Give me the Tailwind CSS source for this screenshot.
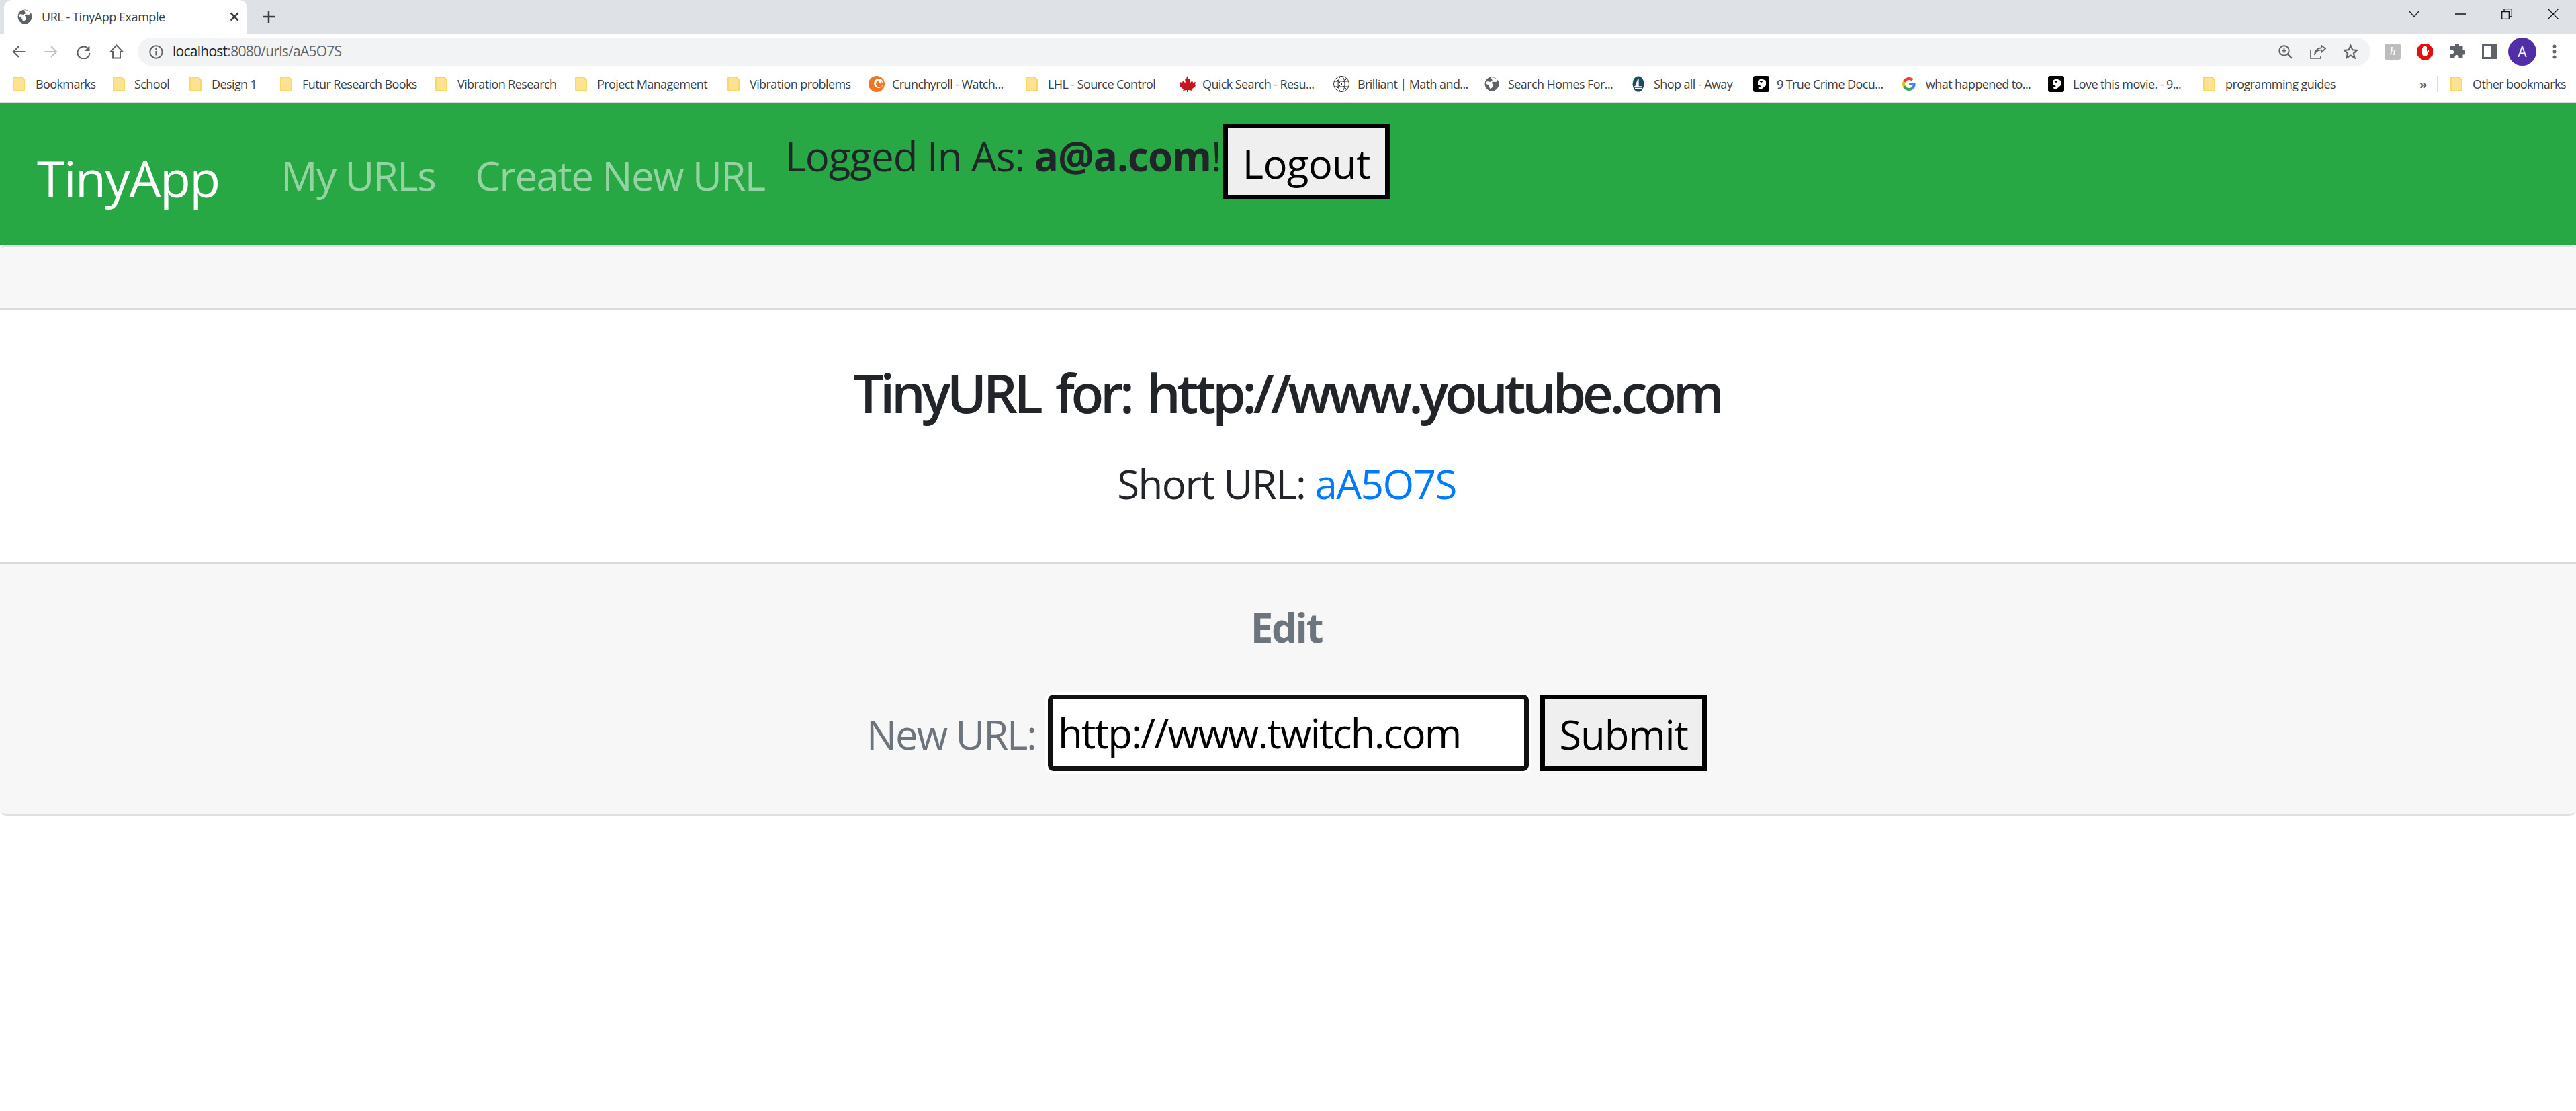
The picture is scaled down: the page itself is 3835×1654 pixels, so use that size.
<!DOCTYPE html>
<html lang="en">

<head>
    <meta charset="UTF-8">
    <title>URL - TinyApp Example</title>
    <script src="https://cdn.jsdelivr.net/npm/@tailwindcss/browser@4"></script>
</head>

<body class="bg-white font-['Open_Sans',sans-serif] h-[1654px] overflow-hidden">

    <!-- Tab strip -->
    <div class="bg-[#dee1e6] h-[50px] flex items-end relative">
        <div class="bg-white w-[362px] h-[50px] ml-[6px] rounded-t-[12px] flex items-center pl-[20px] pr-[12px] text-[18px] text-[#3c4043]">
            <svg class="w-[22px] h-[22px] mr-[14px]" viewBox="0 0 22 22"><circle cx="11" cy="11" r="10.5" fill="#5f6368"/><path d="M9 1.500c2 2 3 3 2.500 5S8 8 6.500 7.500 3 7 1.500 9c1 2 2.500 2.500 4 3.500s2 3 2.500 5.500c3-1 5-2.500 5-5s-2-2-2-4 4-1 5.500-1 3-1 2.500-3C17 2 13 .5 9 1.500z" fill="#fff"/></svg>
            <span class="flex-1 tracking-[-0.025em]">URL - TinyApp Example</span>
            <svg class="w-[14px] h-[14px]" viewBox="0 0 14 14"><path d="M1.500 1.500l11 11M12.500 1.500l-11 11" stroke="#3c4043" stroke-width="2.500"/></svg>
        </div>
        <svg class="w-[20px] h-[20px] ml-[22px] mb-[15px]" viewBox="0 0 20 20"><path d="M10 1v18M1 10h18" stroke="#3c4043" stroke-width="2.500"/></svg>
        <div class="flex-1"></div>
        <div class="flex items-center self-start h-[41px] pr-[26px] gap-[53px]">
            <svg class="w-[16px] h-[10px]" viewBox="0 0 16 10"><path d="M1 1l7 8 7-8" fill="none" stroke="#202124" stroke-width="1.200"/></svg>
            <svg class="w-[16px] h-[2px]" viewBox="0 0 16 2"><path d="M0 1h16" stroke="#111" stroke-width="1.500"/></svg>
            <svg class="w-[16px] h-[16px]" viewBox="0 0 16 16"><path d="M.7 4.700h10.600v10.600H.7zM4 4.500V.7h11.300V12h-4" fill="none" stroke="#111" stroke-width="1.300"/></svg>
            <svg class="w-[16px] h-[16px]" viewBox="0 0 16 16"><path d="M.5.500l15 15M15.500.500l-15 15" stroke="#111" stroke-width="1.200"/></svg>
        </div>
    </div>

    <!-- Toolbar -->
    <div class="h-[48px] flex items-start pt-[6px]">
        <div class="w-[205px] h-[42px] flex items-center pl-[18px] gap-[28px]">
            <svg class="w-[20px] h-[20px]" viewBox="0 0 20 20"><path d="M19.500 10H2M10 2l-8 8 8 8" fill="none" stroke="#5f6368" stroke-width="2"/></svg>
            <svg class="w-[20px] h-[20px]" viewBox="0 0 20 20"><path d="M.5 10H18M10 2l8 8-8 8" fill="none" stroke="#bdc1c6" stroke-width="2"/></svg>
            <svg class="w-[21px] h-[21px]" viewBox="0 0 21 21"><path d="M18 6.500A9 9 0 1 0 19.500 12" fill="none" stroke="#5f6368" stroke-width="2"/><path d="M19.500 1v8h-8z" fill="#5f6368"/></svg>
            <svg class="w-[21px] h-[22px]" viewBox="0 0 21 22"><path d="M10.500 1.500L1.500 11h3.500v9.500h11V11h3.500z" fill="none" stroke="#5f6368" stroke-width="2"/></svg>
        </div>
        <div class="bg-[#f1f3f4] w-[3324px] h-[42px] rounded-full flex items-center pl-[17px] pr-[17px] text-[21px]">
            <svg class="w-[21px] h-[21px] mr-[14px]" viewBox="0 0 21 21"><circle cx="10.500" cy="10.500" r="9.200" fill="none" stroke="#5f6368" stroke-width="2"/><path d="M10.500 9v6.500" stroke="#5f6368" stroke-width="2.200"/><circle cx="10.500" cy="6" r="1.400" fill="#5f6368"/></svg>
            <span class="flex-1 tracking-[-0.035em] text-[#5f6368]"><span class="text-[#202124]">localhost</span>:8080/urls/aA5O7S</span>
            <div class="flex items-center gap-[25px] pr-[1px]">
                <svg class="w-[21px] h-[21px] mr-[1px]" viewBox="0 0 21 21"><circle cx="8.500" cy="8.500" r="7.200" fill="none" stroke="#5f6368" stroke-width="2"/><path d="M13.500 13.500l6.500 6.500" stroke="#5f6368" stroke-width="2.400"/><path d="M8.500 5v7M5 8.500h7" stroke="#5f6368" stroke-width="1.800"/></svg>
                <svg class="w-[24px] h-[21px]" viewBox="0 0 24 21"><path d="M1 8v12h15v-4M7 15c1-5 5-7.500 10-7.500V11l6-5.500L17 .8v3.500C11 4.500 7 9 7 15z" fill="none" stroke="#5f6368" stroke-width="1.700"/></svg>
                <svg class="w-[23px] h-[22px]" viewBox="0 0 23 22"><path d="M11.500 2l2.800 6.300 6.700.6-5.100 4.500 1.600 6.800-6-3.600-6 3.600 1.600-6.800L2 8.900l6.700-.6z" fill="none" stroke="#5f6368" stroke-width="2.200"/></svg>
            </div>
        </div>
        <div class="flex-1 h-[42px] flex items-center pl-[21px] gap-[24px]">
            <div class="w-[24px] h-[24px] bg-[#bdbdbd] rounded-[3px] text-white text-[17px] italic leading-[24px] text-center font-['Liberation_Serif',serif]">h</div>
            <svg class="w-[24px] h-[24px]" viewBox="0 0 24 24"><path d="M7 0h10l7 7v10l-7 7H7l-7-7V7z" fill="#e60f0f"/><path d="M7 12V7.500a1 1 0 0 1 2 0V11V5.500a1 1 0 0 1 2 0V11V4.500a1 1 0 0 1 2 0V11V5.500a1 1 0 0 1 2 0V12l1.500-2a1 1 0 0 1 1.500 1.200L15.500 17c-.8 2-5.500 2.500-7 0z" fill="#fff"/></svg>
            <svg class="w-[24px] h-[24px]" viewBox="0 0 24 24"><path d="M9 1.500a3 3 0 0 1 6 0V4h5.500v6h2a3.200 3.200 0 0 1 0 6.500h-2V22h-6v-2a3 3 0 0 0-6 0v2H2v-6.500h2a3 3 0 0 0 0-6H2V4h7z" fill="#5f6368"/></svg>
            <svg class="w-[22px] h-[22px] ml-[1px]" viewBox="0 0 22 22"><path d="M0 0h22v22H0zM3 3v16h10V3z" fill="#5f6368"/></svg>
            <div class="w-[42px] h-[42px] -ml-[7px] rounded-full bg-[#512da8] text-white text-[21px] leading-[42px] text-center">A</div>
            <svg class="w-[6px] h-[22px] ml-[0px]" viewBox="0 0 6 22"><circle cx="3" cy="3" r="2.500" fill="#5f6368"/><circle cx="3" cy="11" r="2.500" fill="#5f6368"/><circle cx="3" cy="19" r="2.500" fill="#5f6368"/></svg>
        </div>
    </div>

    <!-- Bookmarks bar -->
    <div class="h-[56px] border-b-[2px] border-[#dadce0] flex items-center pl-[19px] text-[18px] text-[#3c4043] tracking-[-0.033em] whitespace-nowrap">
        <div class="w-[149px] flex items-center gap-[16px]">
            <svg class="w-[18px] h-[22px]" viewBox="0 0 18 22"><path d="M1 1h12l4 4v16H1z" fill="#fde293" stroke="#fdd663" stroke-width="2"/></svg>
            <span>Bookmarks</span>
        </div>
        <div class="w-[114px] flex items-center gap-[14px]">
            <svg class="w-[18px] h-[22px]" viewBox="0 0 18 22"><path d="M1 1h12l4 4v16H1z" fill="#fde293" stroke="#fdd663" stroke-width="2"/></svg>
            <span>School</span>
        </div>
        <div class="w-[135px] flex items-center gap-[15px]">
            <svg class="w-[18px] h-[22px]" viewBox="0 0 18 22"><path d="M1 1h12l4 4v16H1z" fill="#fde293" stroke="#fdd663" stroke-width="2"/></svg>
            <span>Design 1</span>
        </div>
        <div class="w-[231px] flex items-center gap-[15px]">
            <svg class="w-[18px] h-[22px]" viewBox="0 0 18 22"><path d="M1 1h12l4 4v16H1z" fill="#fde293" stroke="#fdd663" stroke-width="2"/></svg>
            <span>Futur Research Books</span>
        </div>
        <div class="w-[208px] flex items-center gap-[15px]">
            <svg class="w-[18px] h-[22px]" viewBox="0 0 18 22"><path d="M1 1h12l4 4v16H1z" fill="#fde293" stroke="#fdd663" stroke-width="2"/></svg>
            <span>Vibration Research</span>
        </div>
        <div class="w-[227px] flex items-center gap-[15px]">
            <svg class="w-[18px] h-[22px]" viewBox="0 0 18 22"><path d="M1 1h12l4 4v16H1z" fill="#fde293" stroke="#fdd663" stroke-width="2"/></svg>
            <span>Project Management</span>
        </div>
        <div class="w-[210px] flex items-center gap-[15px]">
            <svg class="w-[18px] h-[22px]" viewBox="0 0 18 22"><path d="M1 1h12l4 4v16H1z" fill="#fde293" stroke="#fdd663" stroke-width="2"/></svg>
            <span>Vibration problems</span>
        </div>
        <div class="w-[234px] flex items-center gap-[11px]">
            <svg class="w-[24px] h-[24px]" viewBox="0 0 24 24"><circle cx="12" cy="12" r="12" fill="#f47521"/><circle cx="15" cy="11" r="7" fill="#fff"/><circle cx="16" cy="12" r="5" fill="#f47521"/><circle cx="17.500" cy="9.500" r="1.800" fill="#fff"/></svg>
            <span>Crunchyroll - Watch...</span>
        </div>
        <div class="w-[227px] flex items-center gap-[15px]">
            <svg class="w-[18px] h-[22px]" viewBox="0 0 18 22"><path d="M1 1h12l4 4v16H1z" fill="#fde293" stroke="#fdd663" stroke-width="2"/></svg>
            <span>LHL - Source Control</span>
        </div>
        <div class="w-[231px] flex items-center gap-[10px]">
            <svg class="w-[26px] h-[24px]" viewBox="0 0 26 24"><path d="M13 0l3 5 2-1-1 7 4-4 1 3 4-1-1 4 1 2-6 5 1 2-6-1v3h-2v-3l-6 1 1-2-6-5 1-2-1-4 4 1 1-3 4 4-1-7 2 1z" fill="#c4161c"/></svg>
            <span>Quick Search - Resu...</span>
        </div>
        <div class="w-[225px] flex items-center gap-[12px]">
            <svg class="w-[24px] h-[24px]" viewBox="0 0 24 24" fill="none" stroke="#333" stroke-width="1"><circle cx="12" cy="12" r="11.500"/><ellipse cx="12" cy="12" rx="5" ry="11.500"/><path d="M1 8h22M1 16h22M4 4l16 16M20 4L4 20"/></svg>
            <span>Brilliant | Math and...</span>
        </div>
        <div class="w-[220px] flex items-center gap-[13px]">
            <svg class="w-[22px] h-[22px]" viewBox="0 0 22 22"><circle cx="11" cy="11" r="10.500" fill="#5f6368"/><path d="M9 1.500c2 2 3 3 2.500 5S8 8 6.500 7.500 3 7 1.500 9c1 2 2.500 2.500 4 3.500s2 3 2.500 5.500c3-1 5-2.500 5-5s-2-2-2-4 4-1 5.500-1 3-1 2.500-3C17 2 13 .5 9 1.500z" fill="#fff"/></svg>
            <span>Search Homes For...</span>
        </div>
        <div class="w-[180px] flex items-center gap-[14px]">
            <svg class="w-[18px] h-[24px]" viewBox="0 0 18 24"><ellipse cx="9" cy="12" rx="8.500" ry="11.500" fill="#1d4b5e"/><path d="M9 4v11H5zM3 16h12M4 18.500h10" stroke="#fff" stroke-width="1.300" fill="#fff"/></svg>
            <span>Shop all - Away</span>
        </div>
        <div class="w-[222px] flex items-center gap-[11px]">
            <svg class="w-[24px] h-[24px]" viewBox="0 0 24 24"><rect width="24" height="24" rx="3" fill="#000"/><path d="M12 4l7 3v7l-7 6-5-2 5-3-5-2V7zM12 7.500L9.500 8.500 12 10l2.500-1.500z" fill="#fff" fill-rule="evenodd"/></svg>
            <span>9 True Crime Docu...</span>
        </div>
        <div class="w-[217px] flex items-center gap-[15px]">
            <svg class="w-[20px] h-[20px]" viewBox="0 0 48 48"><path fill="#EA4335" d="M24 9.500c3.500 0 6.700 1.300 9.200 3.400l6.900-6.900C35.900 2.200 30.300 0 24 0 14.600 0 6.500 5.400 2.600 13.200l8 6.200C12.400 13.600 17.700 9.500 24 9.500z"/><path fill="#4285F4" d="M47 24.500c0-1.600-.2-3.100-.4-4.500H24v9h13c-.6 3-2.300 5.500-4.800 7.200l7.700 6C44.400 38 47 31.800 47 24.500z"/><path fill="#FBBC05" d="M10.500 28.600c-.5-1.400-.8-3-.8-4.600s.3-3.200.8-4.600l-8-6.200C.9 16.500 0 20.100 0 24s.9 7.500 2.600 10.800z"/><path fill="#34A853" d="M24 48c6.500 0 11.900-2.100 15.900-5.800l-7.700-6c-2.200 1.400-4.900 2.300-8.200 2.300-6.300 0-11.600-4.200-13.500-9.900l-8 6.200C6.500 42.600 14.600 48 24 48z"/></svg>
            <span>what happened to...</span>
        </div>
        <div class="w-[231px] flex items-center gap-[13px]">
            <svg class="w-[24px] h-[24px]" viewBox="0 0 24 24"><rect width="24" height="24" rx="3" fill="#000"/><path d="M12 4l7 3v7l-7 6-5-2 5-3-5-2V7zM12 7.500L9.500 8.500 12 10l2.500-1.500z" fill="#fff" fill-rule="evenodd"/></svg>
            <span>Love this movie. - 9...</span>
        </div>
        <div class="w-[322px] flex items-center gap-[15px]">
            <svg class="w-[18px] h-[22px]" viewBox="0 0 18 22"><path d="M1 1h12l4 4v16H1z" fill="#fde293" stroke="#fdd663" stroke-width="2"/></svg>
            <span>programming guides</span>
        </div>
        <span class="w-[26px] text-[#5f6368] font-bold">»</span>
        <div class="w-[2px] h-[24px] bg-[#dadce0] mr-[18px]"></div>
        <div class="flex items-center gap-[15px]">
            <svg class="w-[18px] h-[22px]" viewBox="0 0 18 22"><path d="M1 1h12l4 4v16H1z" fill="#fde293" stroke="#fdd663" stroke-width="2"/></svg>
            <span>Other bookmarks</span>
        </div>
    </div>

    <!-- Navbar -->
    <nav class="bg-[#28a745] h-[210px] flex items-start pl-[55px] whitespace-nowrap">
        <a href="#" class="text-white text-[75px] leading-[90px] mt-[66px] mr-[92px] tracking-[-0.022em]">TinyApp</a>
        <a href="#" class="text-white/50 text-[60px] leading-[80px] mt-[67px] mr-[59px] tracking-[-0.025em]">My URLs</a>
        <a href="#" class="text-white/50 text-[60px] leading-[80px] mt-[67px] mr-[30px] tracking-[-0.026em]">Create New URL</a>
        <div class="flex items-start">
            <span class="text-[60px] leading-[80px] mt-[2px] pt-[36px] text-[#212529] tracking-[-0.017em]">Logged In As: <b>a@a.com</b>!</span>
            <button class="mt-[30px] ml-[3px] w-[248px] h-[113px] pt-[4px] bg-[#efefef] border-[7px] border-black text-black text-[60px] tracking-[-0.012em]">Logout</button>
        </div>
    </nav>

    <!-- Card -->
    <main class="border-y-[3px] border-[#dfdfdf] rounded-[10px]">
        <div class="bg-[#f7f7f7] h-[95px] border-b-[3px] border-[#dadada] rounded-t-[10px]"></div>
        <div class="h-[375px] text-center text-[#212529]">
            <h2 class="text-[80px] leading-[96px] font-semibold pt-[74px] pr-[3px] tracking-[-0.0675em] [word-spacing:8px]">TinyURL for: http://www.youtube.com</h2>
            <p class="text-[60px] leading-[90px] mt-[43px] pr-[4px] tracking-[-0.025em]">Short URL: <a href="#" class="text-[#007bff]">aA5O7S</a></p>
        </div>
        <div class="bg-[#f7f7f7] h-[375px] border-t-[3px] border-[#dadada] text-center rounded-b-[10px]">
            <h5 class="text-[60px] leading-[72px] font-bold text-[#6c757d] pt-[58px] pr-[5px] tracking-[-0.04em]">Edit</h5>
            <form class="flex items-center justify-center mt-[64px] pr-[4px] text-[#6c757d] text-[60px] tracking-[-0.035em]">
                <label class="mr-[18px] pt-[4px]">New URL:</label>
                <div class="relative mr-[17px]">
                    <input class="block w-[716px] h-[114px] bg-white border-[7px] border-[#111] rounded-[8px] outline-[4px] outline-white text-black text-[60px] pl-[8px] tracking-[-0.03em]" type="text" value="http://www.twitch.com">
                    <!-- text caret -->
                    <div class="absolute left-[616px] top-[18px] w-[1px] h-[80px] bg-black"></div>
                </div>
                <button type="button" class="w-[248px] h-[114px] pt-[4px] bg-[#efefef] border-[7px] border-black text-black text-[60px] tracking-[-0.02em]">Submit</button>
            </form>
        </div>
    </main>
</body>

</html>
